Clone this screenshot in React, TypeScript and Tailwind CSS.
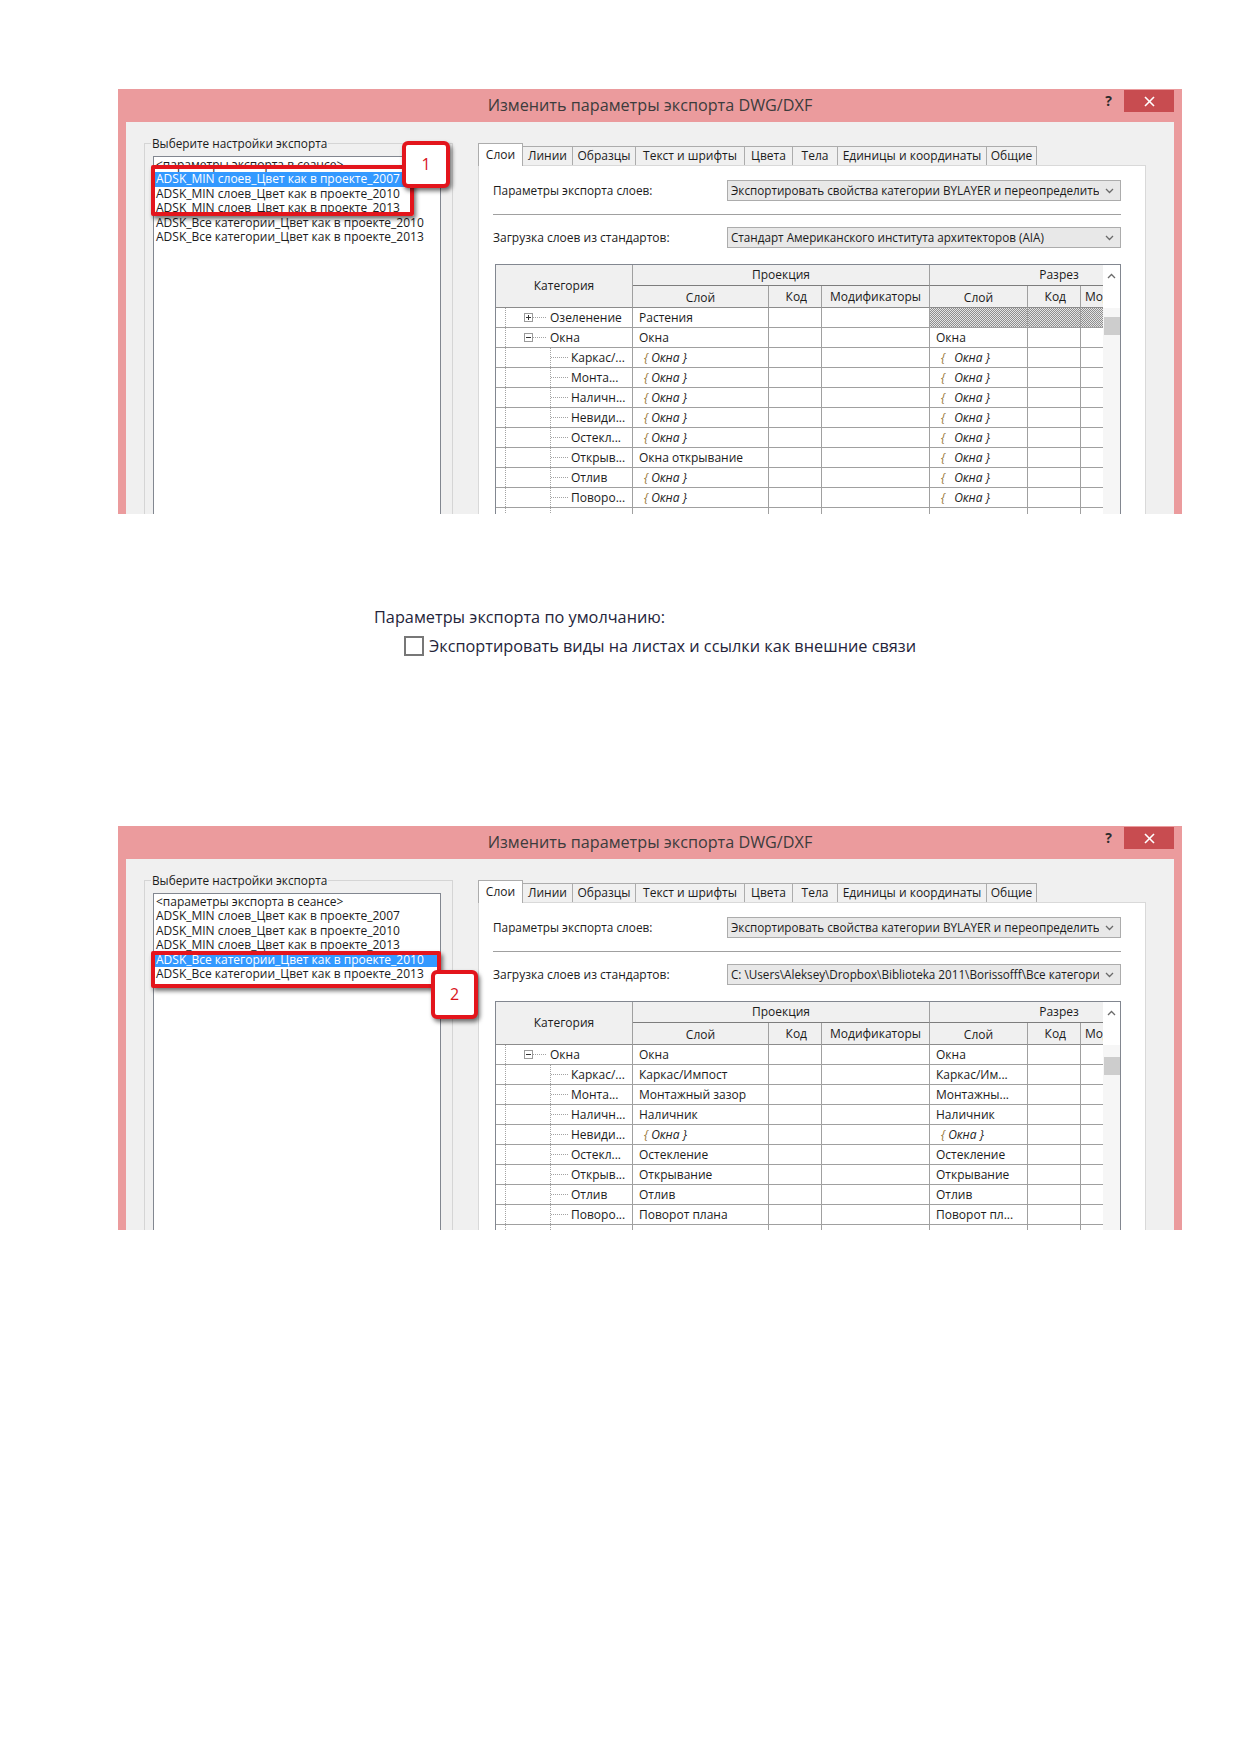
import React from "react";

type Kind = "plus" | "minus" | "child";
type Row = { cat: string; kind: Kind; proj: string; cut: string };

const P = "@"; // inherited layer placeholder: { Окна }
const H = "#"; // hatched (not applicable) cell

const rows1: Row[] = [
  { cat: "Озеленение", kind: "plus", proj: "Растения", cut: H },
  { cat: "Окна", kind: "minus", proj: "Окна", cut: "Окна" },
  { cat: "Каркас/...", kind: "child", proj: P, cut: P },
  { cat: "Монта...", kind: "child", proj: P, cut: P },
  { cat: "Наличн...", kind: "child", proj: P, cut: P },
  { cat: "Невиди...", kind: "child", proj: P, cut: P },
  { cat: "Остекл...", kind: "child", proj: P, cut: P },
  { cat: "Открыв...", kind: "child", proj: "Окна открывание", cut: P },
  { cat: "Отлив", kind: "child", proj: P, cut: P },
  { cat: "Поворо...", kind: "child", proj: P, cut: P },
  { cat: "", kind: "child", proj: "", cut: "" },
];

const rows2: Row[] = [
  { cat: "Окна", kind: "minus", proj: "Окна", cut: "Окна" },
  { cat: "Каркас/...", kind: "child", proj: "Каркас/Импост", cut: "Каркас/Им..." },
  { cat: "Монта...", kind: "child", proj: "Монтажный зазор", cut: "Монтажны..." },
  { cat: "Наличн...", kind: "child", proj: "Наличник", cut: "Наличник" },
  { cat: "Невиди...", kind: "child", proj: P, cut: P },
  { cat: "Остекл...", kind: "child", proj: "Остекление", cut: "Остекление" },
  { cat: "Открыв...", kind: "child", proj: "Открывание", cut: "Открывание" },
  { cat: "Отлив", kind: "child", proj: "Отлив", cut: "Отлив" },
  { cat: "Поворо...", kind: "child", proj: "Поворот плана", cut: "Поворот пл..." },
  { cat: "", kind: "child", proj: "", cut: "" },
];

const presets = [
  "<параметры экспорта в сеансе>",
  "ADSK_MIN слоев_Цвет как в проекте_2007",
  "ADSK_MIN слоев_Цвет как в проекте_2010",
  "ADSK_MIN слоев_Цвет как в проекте_2013",
  "ADSK_Все категории_Цвет как в проекте_2010",
  "ADSK_Все категории_Цвет как в проекте_2013",
];

const tabs: { label: string; w: string }[] = [
  { label: "Линии", w: "w-[50px]" },
  { label: "Образцы", w: "w-[63px]" },
  { label: "Текст и шрифты", w: "w-[109px]" },
  { label: "Цвета", w: "w-[48px]" },
  { label: "Тела", w: "w-[45px]" },
  { label: "Единицы и координаты", w: "w-[149px]" },
  { label: "Общие", w: "w-[50px]" },
];

function ChevronDown() {
  return (
    <svg width="9" height="6" viewBox="0 0 9 6" className="shrink-0">
      <polyline points="1,1 4.5,4.5 8,1" fill="none" stroke="#6a6a6a" strokeWidth="1.3" />
    </svg>
  );
}

function Combo({ text }: { text: string }) {
  return (
    <div className="w-[394px] h-[21px] border border-[#acacac] bg-[#e8e8e8] flex items-center pl-[3px] pr-[6px] gap-[6px]">
      <span className="flex-1 overflow-hidden whitespace-nowrap text-[11.7px] leading-[19px] text-[#1b1b1b]">{text}</span>
      <ChevronDown />
    </div>
  );
}

// dotted tree connectors drawn at the left of a category cell
function TreeGlyph({ kind }: { kind: Kind }) {
  const dot = { stroke: "#a3a3a3", strokeWidth: 1, strokeDasharray: "1 1" };
  if (kind === "child") {
    return (
      <svg width="75" height="19" className="shrink-0">
        <line x1="9.5" y1="0" x2="9.5" y2="19" {...dot} />
        <line x1="54.5" y1="0" x2="54.5" y2="19" {...dot} />
        <line x1="55" y1="9.5" x2="73" y2="9.5" {...dot} />
      </svg>
    );
  }
  return (
    <svg width="53" height="19" className="shrink-0">
      <line x1="9.5" y1="0" x2="9.5" y2="19" {...dot} />
      <rect x="28.5" y="5.5" width="8" height="8" fill="#fff" stroke="#9a9a9a" />
      <line x1="30" y1="9.5" x2="35" y2="9.5" stroke="#333" />
      {kind === "plus" && <line x1="32.5" y1="7" x2="32.5" y2="12" stroke="#333" />}
      <line x1="37" y1="9.5" x2="51" y2="9.5" {...dot} />
    </svg>
  );
}

function LayerText({ value, wide, strong }: { value: string; wide?: boolean; strong?: boolean }) {
  if (value === P) {
    return (
      <span className="italic pl-[11px] text-[#222]">
        <span className="text-[#9a7a3a]">{"{"}</span>
        <span className={wide ? "ml-[9px]" : "ml-[3px]"}>Окна</span> {"}"}
      </span>
    );
  }
  return <span className={`${wide ? "pl-[13px]" : "pl-[6px]"} ${strong ? "font-medium" : ""}`}>{value}</span>;
}

const cellBase = "border-r border-b border-[#a0a0a0] overflow-hidden whitespace-nowrap flex items-center";
const headBase = "bg-[#f0f0f0] border-r border-[#a0a0a0] flex items-center justify-center whitespace-nowrap overflow-hidden";

function LayerTable({ rows, v }: { rows: Row[]; v: 1 | 2 }) {
  return (
    <div className="ml-[2px] mt-[16px] w-[626px] h-[300px] border border-[#828790] flex text-[12px] text-[#1b1b1b]">
      <div className="w-[607px] overflow-hidden">
        <div className="grid w-[693px] grid-cols-[137px_136px_53px_108px_98px_53px_108px] grid-rows-[21px_22px] auto-rows-[20px]">
          <div className={`${headBase} row-span-2 border-b border-b-[#8c8c8c] pb-[1px]`}>Категория</div>
          <div className={`${headBase} col-span-3 border-b border-b-[#7d7d7d]`}>Проекция</div>
          <div className={`${headBase} col-span-3 border-b border-b-[#7d7d7d]`}>Разрез</div>
          <div className={`${headBase} border-b border-b-[#8c8c8c] pt-[2px]`}>Слой</div>
          <div className={`${headBase} border-b border-b-[#8c8c8c] !justify-end pr-[14px]`}>Код</div>
          <div className={`${headBase} border-b border-b-[#8c8c8c]`}>Модификаторы</div>
          <div className={`${headBase} border-b border-b-[#8c8c8c] pt-[2px]`}>Слой</div>
          <div className={`${headBase} border-b border-b-[#8c8c8c] !justify-end pr-[14px]`}>Код</div>
          <div className={`${headBase} border-b border-b-[#8c8c8c] !justify-start pl-[4px]`}>Модификаторы</div>
          {rows.map((r, i) => {
            const strong = v === 2 && i > 0;
            const hatch = r.cut === H ? "bg-[image:repeating-conic-gradient(#8e8e8e_0%_25%,#e4e4e4_0%_50%)] bg-[length:2px_2px]" : "bg-white";
            return (
              <React.Fragment key={i}>
                <div className={`${cellBase} bg-white`}>
                  <TreeGlyph kind={r.kind} />
                  <span className={r.kind === "child" ? "" : "ml-[1px]"}>{r.cat}</span>
                </div>
                <div className={`${cellBase} bg-white`}>
                  <LayerText value={r.proj} strong={strong} />
                </div>
                <div className={`${cellBase} bg-white`} />
                <div className={`${cellBase} bg-white`} />
                <div className={`${cellBase} ${hatch}`}>
                  {r.cut !== H && <LayerText value={r.cut} wide={r.cut === P && v === 1} strong={strong} />}
                </div>
                <div className={`${cellBase} ${hatch}`} />
                <div className={`${cellBase} ${hatch}`} />
              </React.Fragment>
            );
          })}
        </div>
      </div>
      <div className="w-[17px] bg-[#f6f6f6] flex flex-col items-center">
        <div className="h-[21px] w-full bg-white flex items-center justify-center">
          <svg width="9" height="6" viewBox="0 0 9 6">
            <polyline points="1,5 4.5,1.5 8,5" fill="none" stroke="#6a6a6a" strokeWidth="1.3" />
          </svg>
        </div>
        <div className="h-[22px] w-full bg-white" />
        <div className={`${v === 1 ? "mt-[9px]" : "mt-[12px]"} w-[16px] h-[18px] bg-[#cdcdcd]`} />
      </div>
    </div>
  );
}

function Badge({ n, className }: { n: string; className: string }) {
  return (
    <div
      className={`absolute ${className} bg-white border-[4px] border-[#e3151c] rounded-[6px] shadow-[2px_3px_4px_rgba(0,0,0,0.55)] flex items-center justify-center text-[16px] text-[#d9141b]`}
    >
      {n}
    </div>
  );
}

function PresetList({ v }: { v: 1 | 2 }) {
  const sel = v === 1 ? 1 : 4;
  return (
    <div className="relative mt-[5px] w-[288px] h-[370px] bg-white border border-[#828790] pt-[1px] text-[12px] leading-[14.4px] text-[#1b1b1b]">
      {presets.map((t, i) => (
        <div key={i} className={`h-[14.4px] pl-[2px] whitespace-nowrap ${i === sel ? "bg-[#3399ff] text-white" : ""}`}>
          {t}
        </div>
      ))}
      {v === 1 ? (
        <>
          <div className="absolute left-[-3px] top-[8px] w-[263px] h-[51px] border-[4px] border-[#e3151c] rounded-[2px] shadow-[2px_3px_4px_rgba(0,0,0,0.55)]" />
          <Badge n="1" className="left-[248px] top-[-16px] w-[48px] h-[47px]" />
        </>
      ) : (
        <>
          <div className="absolute left-[-3px] top-[57px] w-[290px] h-[37px] border-[4px] border-[#e3151c] rounded-[2px] shadow-[2px_3px_4px_rgba(0,0,0,0.55)]" />
          <Badge n="2" className="left-[277px] top-[76px] w-[47px] h-[49px]" />
        </>
      )}
    </div>
  );
}

function Dialog({ v }: { v: 1 | 2 }) {
  return (
    <div className={`w-[1064px] ${v === 1 ? "h-[425px]" : "h-[404px]"} bg-[#eb9b9d] pt-[1px] flex flex-col overflow-hidden`}>
      <div className="h-[32px] shrink-0 grid grid-cols-[1fr_auto_1fr]">
        <div />
        <div className="self-center pb-[1px] text-[16.2px] text-[#3c3c3c]">Изменить параметры экспорта DWG/DXF</div>
        <div className="flex justify-end items-start pr-[8px]">
          <span className="mt-[1px] mr-[12px] text-[14px] font-bold text-[#2c2c2c] leading-[20px]">?</span>
          <div className="w-[50px] h-[22px] bg-[#c84c50] flex items-center justify-center">
            <svg width="11" height="11" viewBox="0 0 11 11">
              <line x1="1" y1="1" x2="10" y2="10" stroke="#fff" strokeWidth="1.6" />
              <line x1="10" y1="1" x2="1" y2="10" stroke="#fff" strokeWidth="1.6" />
            </svg>
          </div>
        </div>
      </div>
      <div className="flex-1 mx-[8px] bg-[#f0f0f0] flex items-start overflow-hidden">
        <fieldset className="ml-[18px] mt-[13px] w-[309px] h-[420px] border border-[#d5d5d5] px-[8px]">
          <legend className="-ml-[2px] px-[1px] text-[11.8px] leading-[16px] text-[#1b1b1b]">Выберите настройки экспорта</legend>
          <PresetList v={v} />
        </fieldset>
        <div className="ml-[25px] mt-[21px] w-[668px] flex flex-col text-[12px] text-[#1b1b1b]">
          <div className="h-[22px] flex items-end">
            <div className="relative z-10 -mb-px w-[45px] h-[23px] bg-white border border-b-0 border-[#acacac] flex items-start justify-center pt-[2px]">
              Слои
            </div>
            {tabs.map((t) => (
              <div
                key={t.label}
                className={`${t.w} h-[19px] bg-[#f0f0f0] border-t border-r border-[#acacac] flex items-center justify-center whitespace-nowrap`}
              >
                {t.label}
              </div>
            ))}
          </div>
          <div className="h-[420px] bg-white border border-[#d9d9d9] pl-[14px] pr-[24px] flex flex-col">
            <div className="mt-[14px] h-[21px] flex items-center justify-between">
              <span className="text-[11.8px]">Параметры экспорта слоев:</span>
              <Combo text="Экспортировать свойства категории BYLAYER и переопределить" />
            </div>
            <div className="mt-[13px] h-[2px] border-t border-[#a0a0a0] border-b border-b-white" />
            <div className="mt-[11px] h-[21px] flex items-center justify-between">
              <span className="text-[12px]">Загрузка слоев из стандартов:</span>
              <Combo
                text={
                  v === 1
                    ? "Стандарт Американского института архитекторов (AIA)"
                    : "C: \\Users\\Aleksey\\Dropbox\\Biblioteka 2011\\Borissofff\\Все категории_Цвет как в проекте_2010.txt"
                }
              />
            </div>
            <LayerTable rows={v === 1 ? rows1 : rows2} v={v} />
          </div>
        </div>
      </div>
    </div>
  );
}

export default function App() {
  return (
    <div className="w-[1239px] h-[1752px] bg-white pt-[89px] font-['Open_Sans',sans-serif] text-[#1b1b1b]">
      <div className="ml-[118px]">
        <Dialog v={1} />
      </div>
      <div className="ml-[374px] mt-[92px] h-[22px] text-[16.3px] leading-[22px] text-[#24243a]">
        Параметры экспорта по умолчанию:
      </div>
      <div className="ml-[404px] mt-[7px] h-[22px] flex items-center gap-[5px] text-[16.3px] text-[#24243a]">
        <span className="w-[20px] h-[20px] border-[2px] border-[#777] bg-white shrink-0" />
        <span>Экспортировать виды на листах и ссылки как внешние связи</span>
      </div>
      <div className="ml-[118px] mt-[169px]">
        <Dialog v={2} />
      </div>
    </div>
  );
}
